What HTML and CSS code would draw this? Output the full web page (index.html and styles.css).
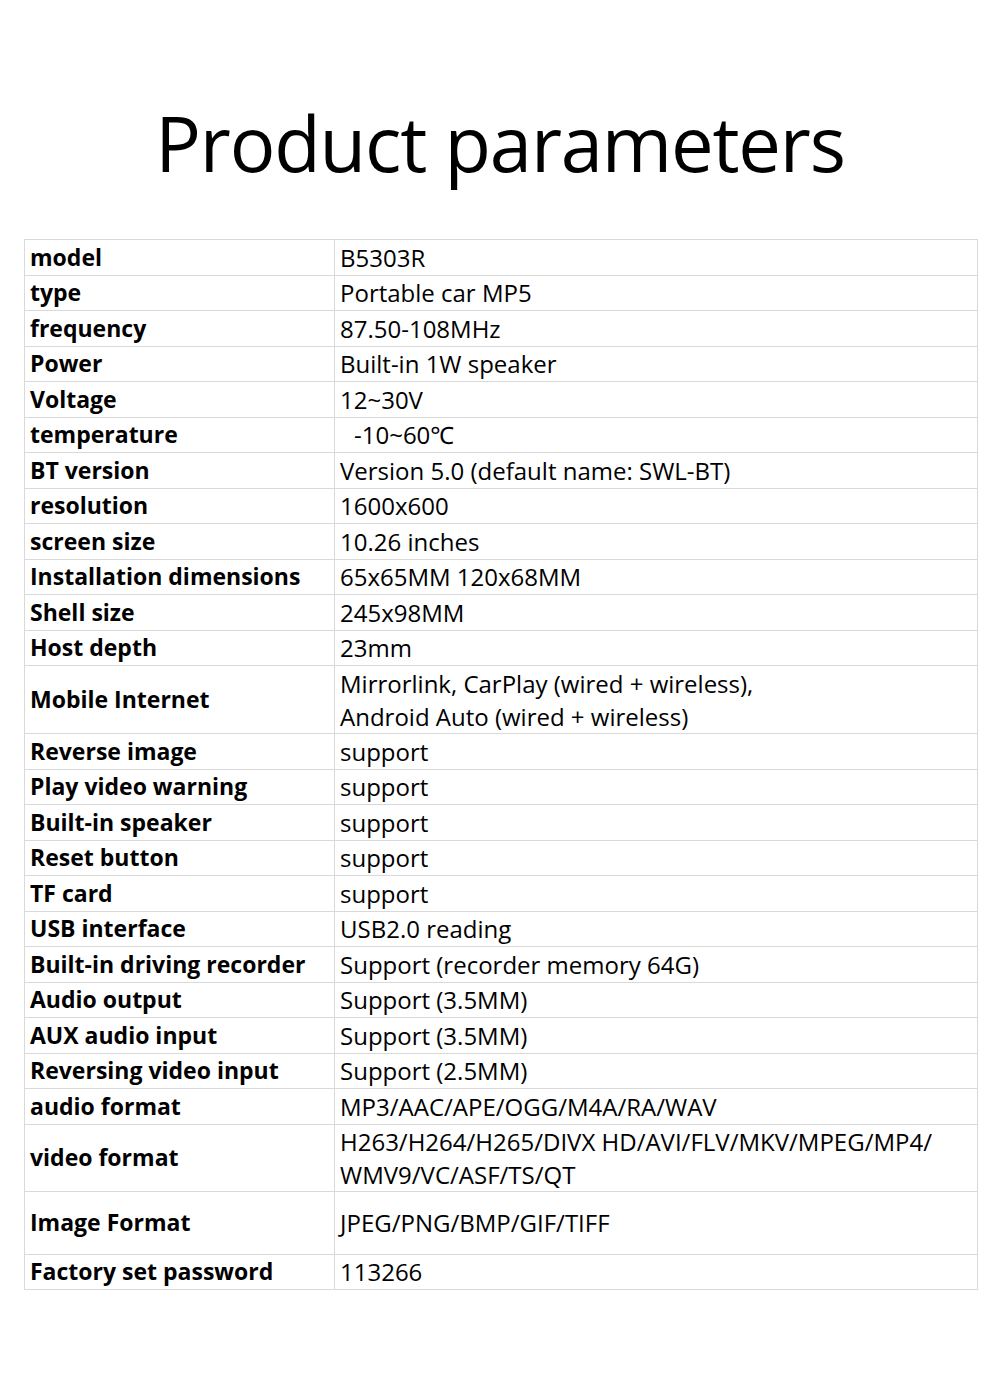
FILE: index.html
```html
<!DOCTYPE html>
<html>
<head>
<meta charset="utf-8">
<link rel="stylesheet" href="styles.css">
</head>
<body>
<div class="page">
  <h1 class="title">Product parameters</h1>
  <table class="params">
    <tr><td class="k">model</td><td class="v">B5303R</td></tr>
    <tr><td class="k">type</td><td class="v">Portable car MP5</td></tr>
    <tr><td class="k">frequency</td><td class="v">87.50-108MHz</td></tr>
    <tr><td class="k">Power</td><td class="v">Built-in 1W speaker</td></tr>
    <tr><td class="k">Voltage</td><td class="v">12~30V</td></tr>
    <tr><td class="k">temperature</td><td class="v"><span class="indent">-10~60℃</span></td></tr>
    <tr><td class="k">BT version</td><td class="v">Version 5.0 (default name: SWL-BT)</td></tr>
    <tr><td class="k">resolution</td><td class="v">1600x600</td></tr>
    <tr><td class="k">screen size</td><td class="v">10.26 inches</td></tr>
    <tr><td class="k">Installation dimensions</td><td class="v">65x65MM 120x68MM</td></tr>
    <tr><td class="k">Shell size</td><td class="v">245x98MM</td></tr>
    <tr><td class="k">Host depth</td><td class="v">23mm</td></tr>
    <tr class="tall"><td class="k">Mobile Internet</td><td class="v">Mirrorlink, CarPlay (wired + wireless),<br>Android Auto (wired + wireless)</td></tr>
    <tr><td class="k">Reverse image</td><td class="v">support</td></tr>
    <tr><td class="k">Play video warning</td><td class="v">support</td></tr>
    <tr><td class="k">Built-in speaker</td><td class="v">support</td></tr>
    <tr><td class="k">Reset button</td><td class="v">support</td></tr>
    <tr><td class="k">TF card</td><td class="v">support</td></tr>
    <tr><td class="k">USB interface</td><td class="v">USB2.0 reading</td></tr>
    <tr><td class="k">Built-in driving recorder</td><td class="v">Support (recorder memory 64G)</td></tr>
    <tr><td class="k">Audio output</td><td class="v">Support (3.5MM)</td></tr>
    <tr><td class="k">AUX audio input</td><td class="v">Support (3.5MM)</td></tr>
    <tr><td class="k">Reversing video input</td><td class="v">Support (2.5MM)</td></tr>
    <tr><td class="k">audio format</td><td class="v">MP3/AAC/APE/OGG/M4A/RA/WAV</td></tr>
    <tr class="tall2"><td class="k">video format</td><td class="v">H263/H264/H265/DIVX HD/AVI/FLV/MKV/MPEG/MP4/<br>WMV9/VC/ASF/TS/QT</td></tr>
    <tr class="mid"><td class="k">Image Format</td><td class="v">JPEG/PNG/BMP/GIF/TIFF</td></tr>
    <tr><td class="k">Factory set password</td><td class="v">113266</td></tr>
  </table>
</div>
</body>
</html>
```

FILE: styles.css
```css
html, body {
  margin: 0;
  padding: 0;
  background: #ffffff;
}

.page {
  width: 1000px;
  height: 1382px;
  padding-top: 100px;
  box-sizing: border-box;
  font-family: "Open Sans", "Noto Sans", sans-serif;
  color: #000;
}

.title {
  margin: 0;
  height: 139px;
  text-align: center;
  font-family: "Open Sans", sans-serif;
  font-weight: 400;
  font-size: 76px;
  line-height: 86px;
  letter-spacing: -1.2px;
}

.params {
  margin-left: 24px;
  width: 954px;
  border-collapse: collapse;
  font-size: 24px;
}

.params td {
  border: 1px solid #d9d9d9;
  height: 34.5px;
  padding: 0 0 0 5px;
  line-height: 33px;
  vertical-align: middle;
  white-space: nowrap;
}

.params td.k {
  width: 304px;
  font-size: 23px;
  font-weight: 700;
}

.params tr.tall td { height: 67px; }
.params tr.tall2 td { height: 66px; }
.params tr.mid td { height: 62px; }

.indent {
  padding-left: 14px;
}
```
